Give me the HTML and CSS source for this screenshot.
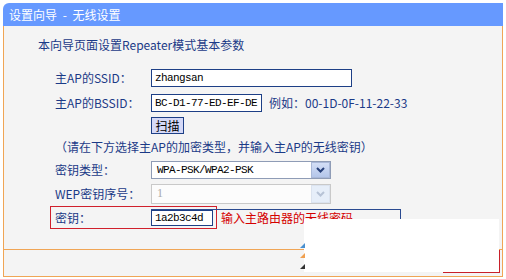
FILE: index.html
```html
<!DOCTYPE html>
<html lang="zh-CN">
<head>
<meta charset="utf-8">
<title>设置向导 - 无线设置</title>
<link rel="stylesheet" href="styles.css">
</head>
<body>
<div class="frame">
  <div class="title">设置向导 - 无线设置</div>
  <div class="panel">
    <div class="intro">本向导页面设置Repeater模式基本参数</div>
    <div class="row r-ssid">
      <span class="label">主AP的SSID：</span>
      <span class="input w-ssid">zhangsan</span>
    </div>
    <div class="row r-bssid">
      <span class="label">主AP的BSSID：</span>
      <span class="input w-bssid">BC-D1-77-ED-EF-DE</span>
      <span class="note">例如：00-1D-0F-11-22-33</span>
    </div>
    <div class="row r-scan">
      <span class="label"></span>
      <span class="btn">扫描</span>
    </div>
    <div class="row r-hint">（请在下方选择主AP的加密类型，并输入主AP的无线密钥）</div>
    <div class="row r-sel">
      <span class="label">密钥类型：</span>
      <span class="select">
        <span class="sel-text">WPA-PSK/WPA2-PSK</span>
        <span class="sel-btn"><svg width="9" height="6" viewBox="0 0 9 6"><polyline points="1,1 4.5,4.5 8,1" fill="none" stroke="#27407a" stroke-width="2"/></svg></span>
      </span>
    </div>
    <div class="row r-sel2">
      <span class="label">WEP密钥序号：</span>
      <span class="select disabled">
        <span class="sel-text">1</span>
        <span class="sel-btn"><svg width="9" height="6" viewBox="0 0 9 6"><polyline points="1,1 4.5,4.5 8,1" fill="none" stroke="#b7c3d6" stroke-width="2"/></svg></span>
      </span>
    </div>
    <div class="row r-key">
      <span class="redbox">
        <span class="label">密钥：</span>
        <span class="input w-key">1a2b3c4d</span>
      </span>
      <span class="redtext">输入主路由器的无线密码</span>
      <span class="annot"></span>
    </div>
  </div>
  <div class="footer"></div>
  <div class="cover"></div>
  <svg class="logo" width="8" height="30" viewBox="0 0 8 30">
    <polygon points="6,0 6,5 1,5" fill="#4a90d0"/>
    <polygon points="6,10 6,15 1,15" fill="#f0a050"/>
    <polygon points="6,21 6,26 1,26" fill="#333333"/>
  </svg>
  <div class="redcorner"></div>
</div>
</body>
</html>
```
FILE: styles.css
```css
html, body {
  margin: 0;
  padding: 0;
  background: #ffffff;
}
body {
  font-family: "Noto Sans CJK SC", "Noto Sans", sans-serif;
  font-size: 12px;
  color: #1b3a87;
}
.frame {
  position: relative;
  width: 500px;
  margin: 3px 0 0 3px;
}
.title {
  height: 23px;
  line-height: 23px;
  background: #6699ff;
  color: #ffffff;
  padding-left: 6px;
  border-radius: 6px 0 0 0;
  font-size: 12px;
  white-space: pre;
  word-spacing: 3px;
}
.panel {
  height: 223px;
  background: #f4f4f4;
  border-left: 1px solid #f0a555;
  border-right: 1px solid #f0a555;
  border-bottom: 1px solid #f0a555;
  padding-left: 34px;
  box-sizing: content-box;
}
.intro {
  padding-top: 7px;
  height: 24px;
  line-height: 24px;
  color: #1b3a87;
}
.row {
  display: flex;
  align-items: center;
  padding-left: 17px;
}
.r-ssid { margin-top: 8px; height: 25px; }
.r-bssid { height: 25px; }
.r-scan { height: 20px; }
.r-hint { height: 23px; }
.r-sel { height: 23px; }
.r-sel2 { height: 25px; }
.r-key { height: 23px; position: relative; padding-left: 12px; }
.label {
  width: 96px;
  flex: none;
  white-space: nowrap;
}
.input {
  display: inline-flex;
  align-items: center;
  box-sizing: border-box;
  height: 18px;
  border: 1px solid #1d3f86;
  background: #ffffff;
  padding-left: 3px;
  font-family: "Liberation Mono", monospace;
  font-size: 11px;
  letter-spacing: -0.6px;
  color: #000000;
}
.w-ssid { width: 201px; }
.w-bssid { width: 111px; }
.note { margin-left: 7px; white-space: nowrap; }
.btn {
  box-sizing: border-box;
  width: 33px;
  height: 17px;
  border: 1px solid #1d3f86;
  background: #d5d9f7;
  color: #000000;
  display: flex;
  align-items: center;
  justify-content: center;
  font-size: 12px;
}
.select {
  box-sizing: border-box;
  width: 180px;
  height: 18px;
  border: 1px solid #8f9cb6;
  background: #ffffff;
  display: flex;
  align-items: stretch;
}
.r-sel2 .select { height: 20px; }
.sel-text {
  flex: 1;
  display: flex;
  align-items: center;
  padding-left: 5px;
  font-family: "Liberation Mono", monospace;
  font-size: 11px;
  letter-spacing: -0.6px;
  color: #000000;
}
.sel-btn {
  width: 17px;
  display: flex;
  align-items: center;
  justify-content: center;
  background: linear-gradient(#d3def6, #b4c6ea);
  border: 1px solid #a9b8d8;
}
.select.disabled {
  border-color: #c9c9c9;
  background: #fcfcfc;
}
.select.disabled .sel-text { color: #a8a8a8; font-family: "Liberation Serif", serif; font-size: 12px; }
.select.disabled .sel-btn {
  background: #e6eef9;
  border-color: #dbe3ef;
}
.redbox {
  display: flex;
  align-items: center;
  box-sizing: border-box;
  height: 23px;
  border: 1px solid #d0202c;
  padding: 0 3px 0 4px;
}
.w-key { width: 62px; height: 16px; }
.redtext {
  margin-left: 4px;
  color: #d40000;
  white-space: nowrap;
}
.annot {
  position: absolute;
  left: 113px;
  top: 3px;
  width: 249px;
  height: 16px;
  border-top: 1px solid #2a4a90;
  border-right: 1px solid #2a4a90;
}
.footer {
  height: 26px;
  background: #f4f4f4;
  border-left: 1px solid #f0a555;
  border-right: 1px solid #f0a555;
  border-bottom: 1px solid #f0a555;
}
.cover {
  position: absolute;
  left: 301px;
  top: 216px;
  width: 195px;
  height: 53px;
  background: #ffffff;
}
.redcorner {
  position: absolute;
  left: 440px;
  top: 247px;
  width: 56px;
  height: 22px;
  border-right: 1px solid #c8202a;
  border-bottom: 1px solid #c8202a;
}
.logo {
  position: absolute;
  left: 296px;
  top: 240px;
}
```
